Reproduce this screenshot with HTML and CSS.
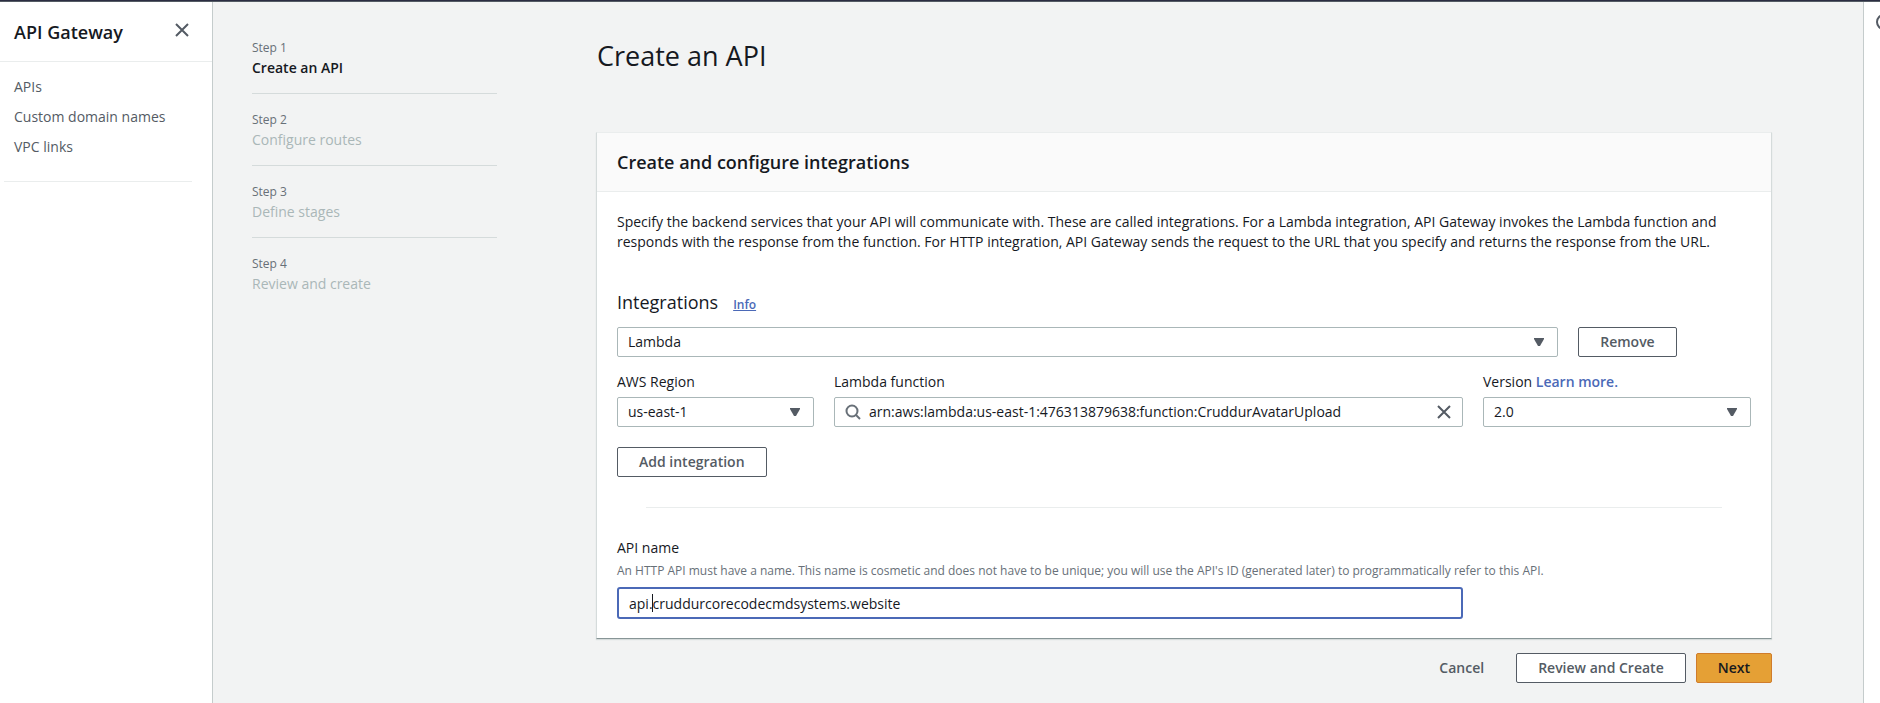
FILE: index.html
```html
<!DOCTYPE html>
<html lang="en">
<head>
<meta charset="utf-8">
<title>API Gateway - Create an API</title>
<link rel="stylesheet" href="styles.css">
</head>
<body>
<div class="topbar"></div>
<div class="app">
  <aside class="sidebar">
    <div class="sidebar-head">
      <h2 class="sidebar-title">API Gateway</h2>
      <button class="icon-button" type="button" aria-label="Close navigation">
        <svg class="icon" viewBox="0 0 16 16"><path d="M2 2l12 12M14 2L2 14"/></svg>
      </button>
    </div>
    <nav class="sidebar-nav">
      <a class="nav-link" href="#">APIs</a>
      <a class="nav-link" href="#">Custom domain names</a>
      <a class="nav-link" href="#">VPC links</a>
    </nav>
    <hr class="sidebar-rule">
  </aside>

  <main class="main">
    <ol class="steps">
      <li class="step step-active"><span class="step-number">Step 1</span><span class="step-name">Create an API</span></li>
      <li class="step"><span class="step-number">Step 2</span><span class="step-name">Configure routes</span></li>
      <li class="step"><span class="step-number">Step 3</span><span class="step-name">Define stages</span></li>
      <li class="step"><span class="step-number">Step 4</span><span class="step-name">Review and create</span></li>
    </ol>

    <form class="content">
      <h1 class="page-title">Create an API</h1>
      <section class="card">
        <header class="card-head"><h2 class="card-title">Create and configure integrations</h2></header>
        <div class="card-body">
          <p class="intro">Specify the backend services that your API will communicate with. These are called integrations. For a Lambda integration, API Gateway invokes the Lambda function and responds with the response from the function. For HTTP integration, API Gateway sends the request to the URL that you specify and returns the response from the URL.</p>

          <div class="section-head">
            <label class="section-title" for="type">Integrations</label>
            <a class="info-link" href="#">Info</a>
          </div>
          <div class="type-row">
            <div class="select-wrap type-select">
              <select class="control" id="type"><option>Lambda</option></select>
              <svg class="caret" viewBox="0 0 10 9"><path d="M0 0h10v1L6 8H4L0 1z"/></svg>
            </div>
            <button class="button" type="button">Remove</button>
          </div>

          <div class="field-grid">
            <div class="field">
              <label class="label" for="region">AWS Region</label>
              <div class="select-wrap">
                <select class="control" id="region"><option>us-east-1</option></select>
                <svg class="caret" viewBox="0 0 10 9"><path d="M0 0h10v1L6 8H4L0 1z"/></svg>
              </div>
            </div>
            <div class="field">
              <label class="label" for="function">Lambda function</label>
              <div class="control search">
                <svg class="icon icon-search" viewBox="0 0 16 16"><circle cx="7" cy="7" r="5.5"/><path d="M11 11l4 4"/></svg>
                <input class="search-input" id="function" type="text" value="arn:aws:lambda:us-east-1:476313879638:function:CruddurAvatarUpload">
                <button class="icon-button" type="button" aria-label="Clear function">
                  <svg class="icon" viewBox="0 0 16 16"><path d="M2 2l12 12M14 2L2 14"/></svg>
                </button>
              </div>
            </div>
            <div class="field">
              <div class="label"><label for="version">Version</label> <a class="learn-link" href="#">Learn more.</a></div>
              <div class="select-wrap">
                <select class="control" id="version"><option>2.0</option></select>
                <svg class="caret" viewBox="0 0 10 9"><path d="M0 0h10v1L6 8H4L0 1z"/></svg>
              </div>
            </div>
          </div>

          <button class="button" type="button">Add integration</button>
          <hr class="card-rule">

          <label class="label" for="name">API name</label>
          <p class="hint" id="name-hint">An HTTP API must have a name. This name is cosmetic and does not have to be unique; you will use the API's ID (generated later) to programmatically refer to this API.</p>
          <div class="field-grid name-grid">
            <div class="name-field">
              <input class="control control-focused" id="name" type="text" aria-describedby="name-hint" value="api.cruddurcorecodecmdsystems.website">
              <span class="text-cursor"></span>
            </div>
          </div>
        </div>
      </section>
      <div class="actions">
        <button class="button button-link" type="button">Cancel</button>
        <button class="button" type="button">Review and Create</button>
        <button class="button button-primary" type="submit">Next</button>
      </div>
    </form>
  </main>

  <aside class="help">
    <button class="icon-button" type="button" aria-label="Open help panel">
      <svg class="icon" viewBox="0 0 16 16"><circle cx="8" cy="8" r="7"/><path d="M8 11V7M8 5V4"/></svg>
    </button>
  </aside>
</div>
</body>
</html>
```
FILE: styles.css
```css
* { box-sizing: border-box; }

body {
  margin: 0;
  min-height: 100vh;
  display: flex;
  flex-direction: column;
  overflow: hidden;
  background: #f2f3f3;
  color: #16191f;
  font: 14px/20px "Open Sans", "Noto Sans", sans-serif;
}

h1, h2, p, ol { margin: 0; padding: 0; }
hr { border: 0; height: 1px; background: #eaeded; }
a { color: #4b69b7; }
button, input, select { font: inherit; color: inherit; }

.topbar { height: 2px; background: #2b2d42; border-bottom: 1px solid #545b64; }
.app { flex: 1; display: flex; }

.icon { display: block; width: 16px; height: 16px; fill: none; stroke: #545b64; stroke-width: 2; }
.icon-button { display: block; padding: 0; border: 0; background: none; }

.sidebar { flex: none; width: 213px; background: #fff; border-right: 1px solid #c5cccc; }
.sidebar-head {
  display: flex;
  justify-content: space-between;
  align-items: flex-start;
  padding: 20px 22px 19px 14px;
  border-bottom: 1px solid #eaeded;
}
.sidebar-title { font-size: 18px; line-height: 20px; font-weight: 600; }
.sidebar-nav { display: flex; flex-direction: column; gap: 10px; padding: 15px 14px 0; }
.nav-link { color: #545b64; text-decoration: none; }
.sidebar-rule { margin: 24px 20px 0 4px; }

.main { flex: 1; min-width: 0; display: flex; gap: 99px; padding: 0 91px 20px 39px; }
.steps { flex: none; width: 245px; padding-top: 36px; list-style: none; }
.step { display: flex; flex-direction: column; padding-bottom: 15px; margin-bottom: 16px; border-bottom: 1px solid #d5dbdb; color: #aab7b8; }
.step:last-child { border-bottom: 0; }
.step-number { color: #687078; font-size: 12px; }
.step-active .step-name { color: #16191f; font-weight: 600; }

.content { flex: 1; min-width: 0; }
.page-title { padding: 36px 1px 58px; font-size: 27px; line-height: 36px; font-weight: 400; }

.card {
  background: #fff;
  border: 1px solid #d5dbdb;
  border-top-color: #eaeded;
  border-bottom-color: #879596;
  box-shadow: 0 1px 1px #d5dbdb;
}
.card-head { padding: 19px 20px; background: #fafafa; border-bottom: 1px solid #eaeded; }
.card-title { font-size: 18px; line-height: 20px; font-weight: 600; }
.card-body { padding: 20px 20px 19px; }
.intro { max-width: 1100px; }

.section-head { display: flex; align-items: baseline; gap: 15px; padding: 38px 0 12px; }
.section-title { font-size: 18px; line-height: 24px; }
.info-link { font-size: 12px; font-weight: 600; }

.control {
  display: block;
  width: 100%;
  height: 30px;
  padding: 0 10px;
  border: 1px solid #aab7b8;
  border-radius: 2px;
  background: #fff;
  appearance: none;
  outline: 0;
}
.control-focused { height: 32px; border: 2px solid #4b69b7; border-radius: 3px; }
.select-wrap { position: relative; }
.caret { position: absolute; top: 11px; right: 14px; width: 10px; height: 9px; fill: #545b64; pointer-events: none; }

.search { display: flex; align-items: center; gap: 8px; }
.search-input { flex: 1; min-width: 0; padding: 0; border: 0; outline: 0; }
.icon-search { stroke: #687078; }

.type-row { display: flex; gap: 20px; }
.type-select { width: 83%; }

.field-grid { display: grid; grid-template-columns: 197fr 629fr 268fr; gap: 20px; margin: 15px 0 20px; }
.label { display: block; margin-bottom: 5px; }
.learn-link { font-weight: 600; text-decoration: none; }

.button {
  height: 30px;
  padding: 0 21px;
  border: 1px solid #545b64;
  border-radius: 2px;
  background: #fff;
  color: #545b64;
  font-weight: 600;
  white-space: nowrap;
}
.button-link { border-color: transparent; background: none; }
.button-primary { border-color: #d07c2b; background: #e5a035; color: #16191f; }

.card-rule { margin: 30px 29px; }
.hint { margin-top: -2px; color: #687078; font-size: 12px; }
.name-grid { margin: 6px 0 0; }
.name-field { position: relative; grid-column: span 2; }
.text-cursor { position: absolute; top: 7px; left: 35px; width: 1px; height: 18px; background: #16191f; }

.actions { display: flex; justify-content: flex-end; gap: 10px; padding-top: 14px; }

.help { flex: none; width: 17px; padding: 12px 0 0 12px; overflow: hidden; background: #fff; border-left: 1px solid #c5cccc; }
```
